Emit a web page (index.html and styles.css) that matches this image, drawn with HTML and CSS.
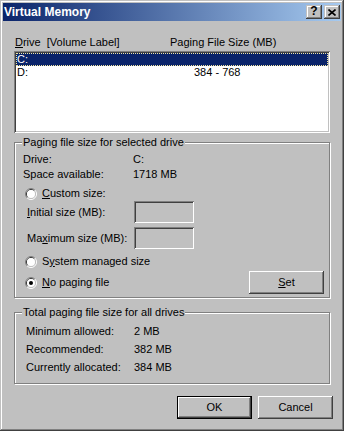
FILE: index.html
```html
<!DOCTYPE html>
<html>
<head>
<meta http-equiv="Content-Type" content="text/html; charset=utf-8"/>
<title>Virtual Memory</title>
<link rel="stylesheet" href="styles.css">
</head>
<body>
<div class="window">
  <div class="titlebar">
    <span class="title">Virtual Memory</span>
    <div class="title-buttons">
      <span class="tbtn tbtn-help">?</span>
      <span class="tbtn">
        <svg width="8" height="7" viewBox="0 0 8 7"><path d="M0.5 0.5 L7.5 6.5 M7.5 0.5 L0.5 6.5" stroke="#000" stroke-width="1.6" fill="none"/></svg>
      </span>
    </div>
  </div>

  <div class="client">
    <div class="list-head">
      <span><u>D</u>rive&nbsp;&nbsp;[Volume Label]</span>
      <span>Paging File Size (MB)</span>
    </div>
    <div class="listbox">
      <div class="list-row selected"><span>C:</span><span></span></div>
      <div class="list-row"><span>D:</span><span>384 - 768</span></div>
    </div>

    <div class="group group-drive">
      <div class="group-title">Paging file size for selected drive</div>
      <div class="info-row info-first"><span class="info-label">Drive:</span><span>C:</span></div>
      <div class="info-row"><span class="info-label">Space available:</span><span>1718 MB</span></div>

      <div class="radio-row radio-custom">
        <svg class="radio" width="12" height="12" viewBox="0 0 12 12">
          <path d="M2.11 9.89 A5.5 5.5 0 0 1 9.89 2.11" stroke="#808080" fill="none"/>
          <path d="M9.89 2.11 A5.5 5.5 0 0 1 2.11 9.89" stroke="#fff" fill="none"/>
          <path d="M2.82 9.18 A4.5 4.5 0 0 1 9.18 2.82" stroke="#404040" fill="none"/>
          <path d="M9.18 2.82 A4.5 4.5 0 0 1 2.82 9.18" stroke="#c0c0c0" fill="none"/>
          <circle cx="6" cy="6" r="4" fill="#fff"/>
        </svg>
        <span><u>C</u>ustom size:</span>
      </div>
      <div class="field-row field-initial">
        <span class="field-label"><u>I</u>nitial size (MB):</span>
        <span class="textbox"></span>
      </div>
      <div class="field-row field-max">
        <span class="field-label">Ma<u>x</u>imum size (MB):</span>
        <span class="textbox"></span>
      </div>
      <div class="radio-row radio-system">
        <svg class="radio" width="12" height="12" viewBox="0 0 12 12">
          <path d="M2.11 9.89 A5.5 5.5 0 0 1 9.89 2.11" stroke="#808080" fill="none"/>
          <path d="M9.89 2.11 A5.5 5.5 0 0 1 2.11 9.89" stroke="#fff" fill="none"/>
          <path d="M2.82 9.18 A4.5 4.5 0 0 1 9.18 2.82" stroke="#404040" fill="none"/>
          <path d="M9.18 2.82 A4.5 4.5 0 0 1 2.82 9.18" stroke="#c0c0c0" fill="none"/>
          <circle cx="6" cy="6" r="4" fill="#fff"/>
        </svg>
        <span>S<u>y</u>stem managed size</span>
      </div>
      <div class="last-row">
        <div class="radio-row">
          <svg class="radio" width="12" height="12" viewBox="0 0 12 12">
            <path d="M2.11 9.89 A5.5 5.5 0 0 1 9.89 2.11" stroke="#808080" fill="none"/>
            <path d="M9.89 2.11 A5.5 5.5 0 0 1 2.11 9.89" stroke="#fff" fill="none"/>
            <path d="M2.82 9.18 A4.5 4.5 0 0 1 9.18 2.82" stroke="#404040" fill="none"/>
            <path d="M9.18 2.82 A4.5 4.5 0 0 1 2.82 9.18" stroke="#c0c0c0" fill="none"/>
            <circle cx="6" cy="6" r="4" fill="#fff"/>
            <circle cx="6" cy="6" r="2" fill="#000"/>
          </svg>
          <span><u>N</u>o paging file</span>
        </div>
        <span class="button"><u>S</u>et</span>
      </div>
    </div>

    <div class="group group-total">
      <div class="group-title">Total paging file size for all drives</div>
      <div class="info-row info-first"><span class="info-label">Minimum allowed:</span><span>2 MB</span></div>
      <div class="info-row"><span class="info-label">Recommended:</span><span>382 MB</span></div>
      <div class="info-row"><span class="info-label">Currently allocated:</span><span>384 MB</span></div>
    </div>

    <div class="footer">
      <span class="button button-default">OK</span>
      <span class="button">Cancel</span>
    </div>
  </div>
</div>
</body>
</html>
```

FILE: styles.css
```css
body {
  margin: 0;
  font-family: "Liberation Sans", Arial, sans-serif;
  font-size: 11px;
  line-height: 13px;
  color: #000;
  background: #c0c0c0;
}

u {
  text-decoration: underline;
  text-underline-offset: 1px;
}

.window {
  width: 344px;
  height: 431px;
  box-sizing: border-box;
  padding: 3px;
  background: #c0c0c0;
  box-shadow: inset -1px -1px #404040, inset 1px 1px #c0c0c0,
              inset -2px -2px #808080, inset 2px 2px #fff;
}

/* title bar */
.titlebar {
  height: 18px;
  display: flex;
  align-items: center;
  justify-content: space-between;
  padding-left: 1px;
  background: linear-gradient(to right, #0a246a, #a6caf0);
}

.title {
  color: #fff;
  font-weight: bold;
  font-size: 12px;
}

.title-buttons {
  display: flex;
  gap: 2px;
  margin-right: 1px;
}

.tbtn {
  width: 16px;
  height: 14px;
  box-sizing: border-box;
  display: flex;
  align-items: center;
  justify-content: center;
  background: #c0c0c0;
  box-shadow: inset -1px -1px #404040, inset 1px 1px #c0c0c0,
              inset -2px -2px #808080, inset 2px 2px #fff;
}

.tbtn-help {
  font-weight: bold;
  font-size: 12px;
  padding-bottom: 1px;
}

/* client area */
.client {
  padding: 0 11px;
  display: flex;
  flex-direction: column;
}

.list-head {
  margin-top: 15px;
  padding-left: 1px;
  display: grid;
  grid-template-columns: 155px 1fr;
}

.listbox {
  margin-top: 2px;
  height: 82px;
  box-sizing: border-box;
  padding: 2px;
  background: #fff;
  box-shadow: inset 1px 1px #808080, inset -1px -1px #fff,
              inset 2px 2px #404040, inset -2px -2px #c0c0c0;
}

.list-row {
  height: 13px;
  padding-left: 1px;
  display: grid;
  grid-template-columns: 177px 1fr;
}

.list-row.selected {
  background: #0a246a;
  color: #fff;
  outline: 1px dotted #f2e7a0;
  outline-offset: -1px;
}

/* group boxes */
.group {
  display: flex;
  flex-direction: column;
  border: 1px solid #808080;
  box-shadow: inset 1px 1px #fff, 1px 1px #fff;
}

.group-drive {
  margin-top: 9px;
  padding-bottom: 3px;
}

.group-total {
  margin-top: 14px;
  padding-bottom: 9px;
}

.group-title {
  align-self: flex-start;
  margin: -7px 0 0 7px;
  padding: 0 1px;
  background: #c0c0c0;
}

.info-row {
  display: flex;
  margin-top: 2px;
}

.info-first {
  margin-top: 4px;
}

.group-drive .info-label {
  padding-left: 8px;
  width: 110px;
}

.group-total .info-row {
  margin-top: 5px;
}

.group-total .info-first {
  margin-top: 6px;
}

.group-total .info-label {
  padding-left: 11px;
  width: 108px;
}

.radio-row {
  display: flex;
  align-items: center;
  gap: 5px;
  height: 13px;
  padding-left: 10px;
}

.radio {
  display: block;
}

.radio-custom {
  margin-top: 6px;
}

.radio-system {
  margin-top: 6px;
}

.field-row {
  display: flex;
  align-items: center;
  height: 22px;
}

.field-initial {
  margin-top: 1px;
}

.field-max {
  margin-top: 4px;
}

.field-label {
  width: 107px;
  padding-left: 12px;
}

.textbox {
  width: 60px;
  height: 22px;
  box-sizing: border-box;
  background: #c0c0c0;
  box-shadow: inset 1px 1px #808080, inset -1px -1px #fff,
              inset 2px 2px #404040, inset -2px -2px #c0c0c0;
}

.last-row {
  margin-top: 3px;
  height: 23px;
  display: flex;
  align-items: center;
  justify-content: space-between;
  padding-right: 5px;
}

/* push buttons */
.button {
  width: 75px;
  height: 23px;
  box-sizing: border-box;
  display: flex;
  align-items: center;
  justify-content: center;
  background: #c0c0c0;
  box-shadow: inset -1px -1px #404040, inset 1px 1px #fff,
              inset -2px -2px #808080;
}

.button-default {
  border: 1px solid #000;
}

.footer {
  margin-top: 12px;
  margin-right: -3px;
  display: flex;
  justify-content: flex-end;
  gap: 6px;
}
```
